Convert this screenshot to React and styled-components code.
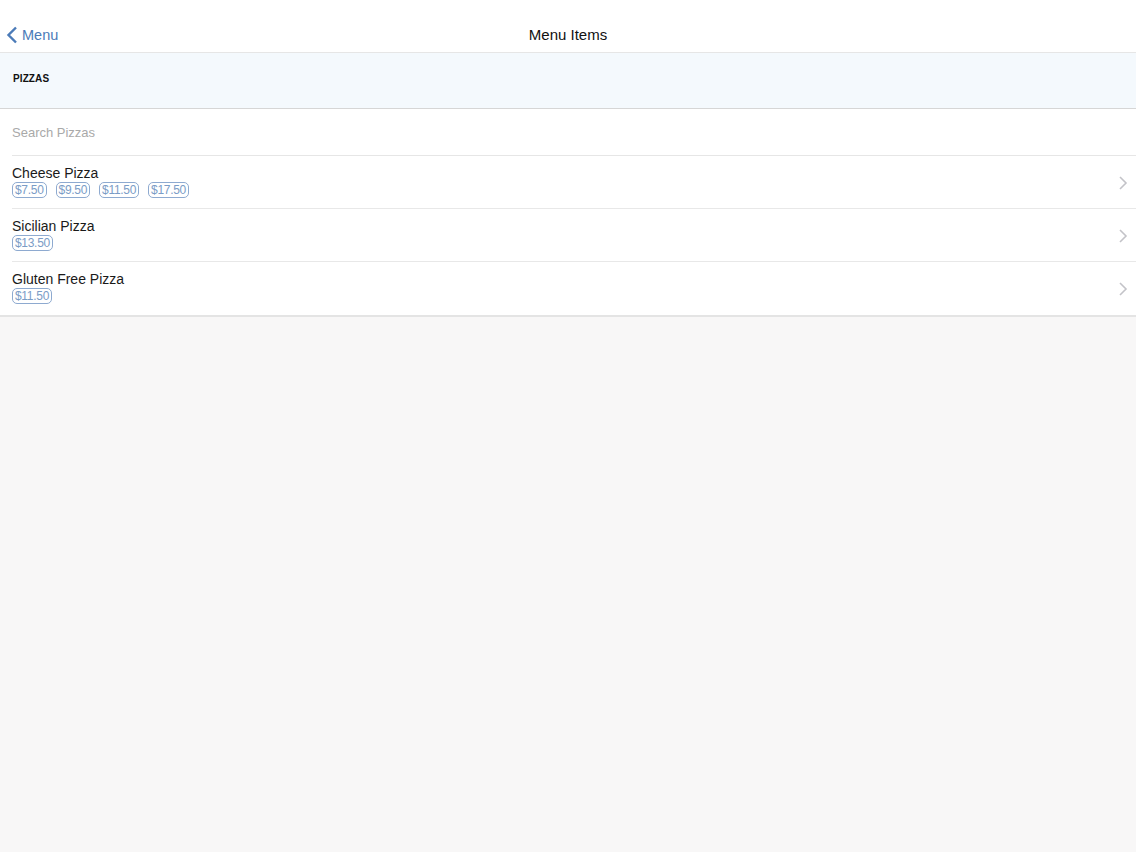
import React from 'react';
import styled, { createGlobalStyle } from 'styled-components';

const Global = createGlobalStyle`
  html, body { margin: 0; padding: 0; }
  body {
    background: #f8f7f7;
    font-family: "Liberation Sans", Arial, sans-serif;
    -webkit-font-smoothing: antialiased;
  }
`;

const Page = styled.div`
  min-height: 852px;
  background: #f8f7f7;
`;

const NavBar = styled.header`
  height: 53px;
  background: #fff;
  border-bottom: 1px solid #e6e6e6;
  display: grid;
  grid-template-columns: 1fr auto 1fr;
  align-items: center;
  padding-top: 17px;
  box-sizing: border-box;
`;

const Back = styled.a`
  display: flex;
  align-items: center;
  gap: 4px;
  padding-left: 6px;
  color: #4b7bb8;
  font-size: 14.5px;
  text-decoration: none;
`;

const Title = styled.h1`
  margin: 0;
  font-size: 15px;
  font-weight: normal;
  color: #111;
`;

const SectionHeader = styled.div`
  height: 56px;
  background: #f4f9fd;
  border-bottom: 1px solid #d6d6d6;
  box-sizing: border-box;
  padding: 20px 13px 0;
  font-size: 10px;
  font-weight: bold;
  color: #111;
  letter-spacing: 0.1px;
`;

const SearchRow = styled.div`
  background: #fff;
  height: 47px;
  display: flex;
  align-items: center;
  padding-left: 12px;
  position: relative;
  &::after {
    content: '';
    position: absolute;
    left: 12px;
    right: 0;
    bottom: 0;
    border-bottom: 1px solid #e6e6e6;
  }
`;

const SearchInput = styled.input`
  border: none;
  outline: none;
  background: transparent;
  font-family: inherit;
  font-size: 13px;
  color: #333;
  width: 100%;
  padding: 0;
  &::placeholder { color: #a9a9a9; }
`;

const List = styled.ul`
  list-style: none;
  margin: 0;
  padding: 0;
  background: #fff;
  border-bottom: 2px solid #e4e4e4;
`;

const Row = styled.li`
  height: 53px;
  box-sizing: border-box;
  display: flex;
  align-items: center;
  padding: 0 8px 0 12px;
  position: relative;
  &:not(:last-child)::after {
    content: '';
    position: absolute;
    left: 12px;
    right: 0;
    bottom: 0;
    border-bottom: 1px solid #e8e8e8;
  }
`;

const Info = styled.div`
  flex: 1;
  display: flex;
  flex-direction: column;
  margin-top: -2px;
`;

const Name = styled.div`
  font-size: 14px;
  color: #1a1a1a;
  line-height: 17px;
`;

const Prices = styled.div`
  display: flex;
  gap: 9px;
`;

const Price = styled.span`
  font-size: 12px;
  line-height: 14px;
  color: #7b9cc6;
  border: 1px solid #8eaad0;
  border-radius: 5px;
  padding: 0 2px;
  letter-spacing: -0.3px;
`;

const Chevron = () => (
  <svg width="10" height="16" viewBox="0 0 10 16">
    <path d="M2 2 L8 8 L2 14" fill="none" stroke="#c3c3c8" strokeWidth="1.6" />
  </svg>
);

const BackChevron = () => (
  <svg width="12" height="18" viewBox="0 0 12 18">
    <path d="M10 1.5 L2.5 9 L10 16.5" fill="none" stroke="#4b7bb8" strokeWidth="2.4" />
  </svg>
);

const items = [
  { name: 'Cheese Pizza', prices: ['$7.50', '$9.50', '$11.50', '$17.50'] },
  { name: 'Sicilian Pizza', prices: ['$13.50'] },
  { name: 'Gluten Free Pizza', prices: ['$11.50'] },
];

export default function App() {
  return (
    <Page>
      <Global />
      <NavBar>
        <Back href="#">
          <BackChevron />
          Menu
        </Back>
        <Title>Menu Items</Title>
        <div />
      </NavBar>
      <SectionHeader>PIZZAS</SectionHeader>
      <SearchRow>
        <SearchInput placeholder="Search Pizzas" />
      </SearchRow>
      <List>
        {items.map(item => (
          <Row key={item.name}>
            <Info>
              <Name>{item.name}</Name>
              <Prices>
                {item.prices.map(p => <Price key={p}>{p}</Price>)}
              </Prices>
            </Info>
            <Chevron />
          </Row>
        ))}
      </List>
    </Page>
  );
}
